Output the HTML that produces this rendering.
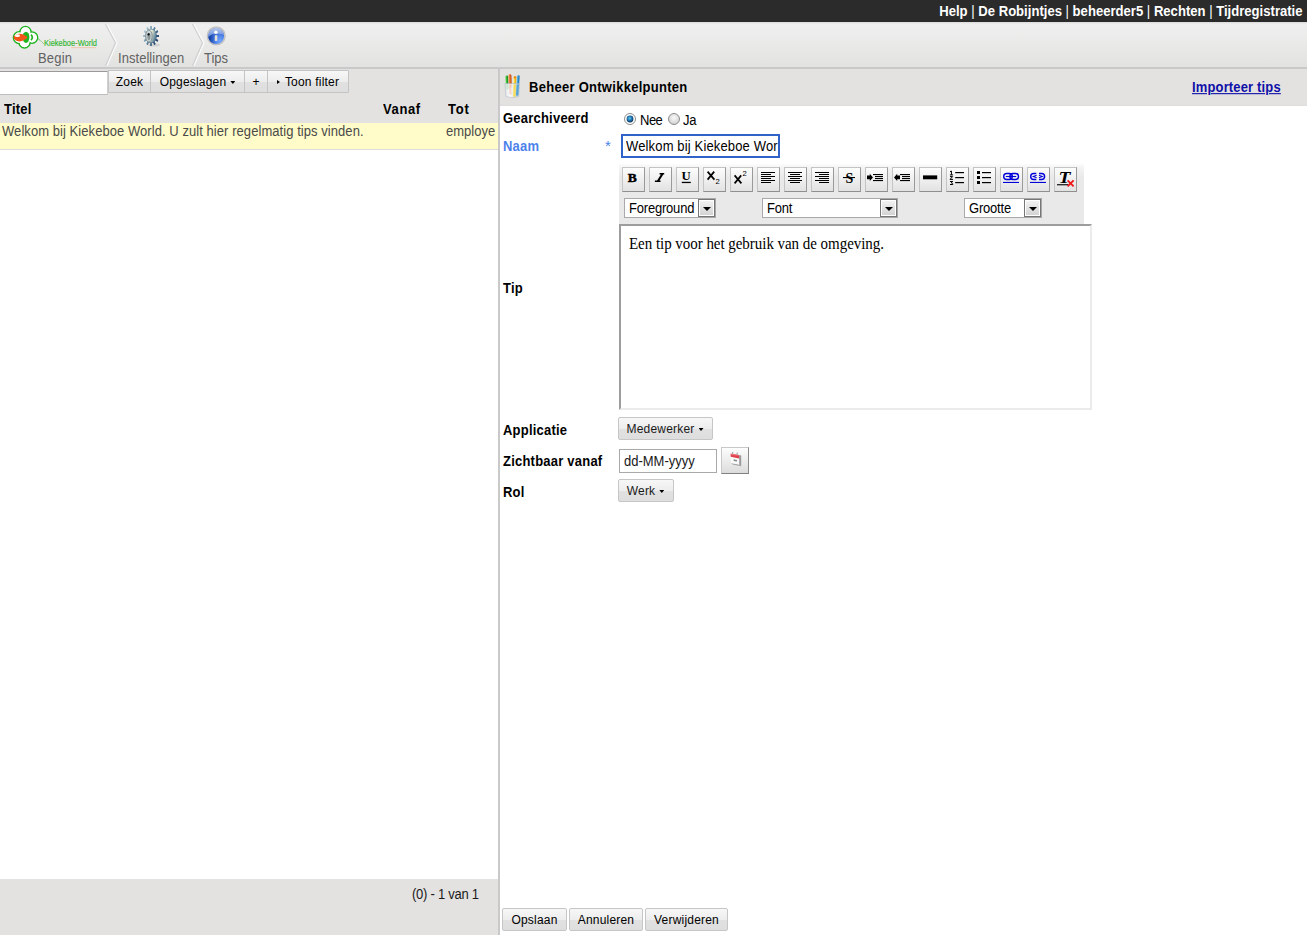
<!DOCTYPE html>
<html><head><meta charset="utf-8">
<style>
*{box-sizing:border-box}
html,body{margin:0;padding:0;width:1307px;height:935px;overflow:hidden;background:#fff;font-family:"Liberation Sans",sans-serif;font-size:13px;color:#000}
.a{position:absolute;white-space:nowrap;line-height:15px}
.b{font-weight:bold}
.sy{transform:scaleY(1.1);transform-origin:0 12px}
.syi{display:inline-block;transform:scaleY(1.1)}
#top{position:absolute;left:0;top:0;width:1307px;height:22px;background:#2b2b2b;color:#fff;font-weight:bold;font-size:13px}
#top .s{font-weight:normal}
#nav{position:absolute;left:0;top:22px;width:1307px;height:45px;background:linear-gradient(#d9d9d9 0,#efefef 2px,#ebebea 40%,#e2e2e1 100%)}
#navb{position:absolute;left:0;top:67px;width:1307px;height:2px;background:#c9c9c9}
.navt{position:absolute;color:#626262;font-size:13px;line-height:15px;white-space:nowrap;transform:scaleY(1.1);transform-origin:0 12px}
.btn{position:absolute;border:1px solid #c6c6c6;background:linear-gradient(#f7f7f7 0,#ededed 50%,#e1e1e1 51%,#dedede 100%);border-radius:2px;font-size:12px;line-height:21px;padding-top:1px;text-align:center;color:#000;white-space:nowrap;letter-spacing:0.2px}
.lbl{position:absolute;font-weight:bold;font-size:13px;line-height:15px;white-space:nowrap;letter-spacing:0.22px;transform:scaleY(1.1);transform-origin:0 12px}
.tb{position:absolute;top:167px;width:23px;height:25px;border:1px solid #c4c4c4;border-right-color:#9a9a9a;border-bottom-color:#8f8f8f;background:linear-gradient(#fdfdfd,#e2e2e2)}
.tb svg{position:absolute;left:0;top:0}
.sel{position:absolute;top:198px;height:20px;border:1px solid #a9a9a9;background:#fff;font-size:13px;line-height:18px;padding-left:4px;white-space:nowrap;letter-spacing:-0.2px}
.sel i{position:absolute;right:0;top:0;width:17px;height:18px;border:1px solid #767676;background:linear-gradient(#fff,#fff) padding-box}
.sel i b{position:absolute;left:1px;top:1px;right:1px;bottom:1px;background:linear-gradient(#f2f2f2,#d3d3d3)}
.sel i:after{content:"";position:absolute;left:4px;top:7px;width:8px;height:4px;background:#000;clip-path:polygon(0 0,100% 0,50% 100%)}
.arr{display:inline-block;width:5px;height:3px;background:#000;clip-path:polygon(0 0,100% 0,50% 100%);vertical-align:baseline;margin-left:4px;position:relative;top:-2px}
</style></head><body>
<div id="top"><span class="a" style="right:4px;top:4px;font-size:14px;transform:scaleX(0.935);transform-origin:100% 0">Help <span class="s">|</span> De Robijntjes <span class="s">|</span> beheerder5 <span class="s">|</span> Rechten <span class="s">|</span> Tijdregistratie</span></div>
<div id="nav">
  <!-- logo -->
  <svg style="position:absolute;left:0;top:0" width="110" height="45" viewBox="0 22 110 45">
    <g fill="#fff" stroke="#1fb41f" stroke-width="1.5">
      <circle cx="25.5" cy="32.2" r="5.6"/>
      <circle cx="32" cy="37.6" r="5.6"/>
      <circle cx="24.5" cy="42.3" r="5.6"/>
      <circle cx="19.2" cy="37.6" r="5.8"/>
    </g>
    <g fill="#fff">
      <circle cx="25.5" cy="32.2" r="4.85"/>
      <circle cx="32" cy="37.6" r="4.85"/>
      <circle cx="24.5" cy="42.3" r="4.85"/>
      <circle cx="19.2" cy="37.6" r="5.05"/>
      <circle cx="25" cy="37.5" r="5.5"/>
    </g>
    <ellipse cx="26" cy="37.3" rx="3.4" ry="5.6" fill="#22b522"/>
    <path d="M31 34.6 q2.6 2.8 0 5.6" stroke="#22b522" stroke-width="1.7" fill="none"/>
    <ellipse cx="19.6" cy="37.6" rx="6" ry="3.9" fill="#f4561a"/>
    <ellipse cx="24" cy="37.4" rx="3" ry="1.8" fill="#f4561a"/>
    <ellipse cx="17.4" cy="35.7" rx="2.6" ry="1.4" fill="#fff"/>
    <path d="M38 38.5 L43.5 43.5" stroke="#38b038" stroke-width="1" stroke-dasharray="1 0.7"/>
    <text x="44" y="46" font-family="Liberation Sans" font-size="8.6" fill="#2fb52f" stroke="#2fb52f" stroke-width="0.15" textLength="53" lengthAdjust="spacingAndGlyphs">Kiekeboe<tspan fill="#f07a3a">-</tspan>World</text>
    <rect x="71" y="47.3" width="25" height="0.8" fill="#f3b48a" opacity="0.8"/>
  </svg>
  <!-- chevrons -->
  <svg style="position:absolute;left:100px;top:0" width="20" height="45" viewBox="0 0 20 45"><path d="M5.5 2 L15.5 21 L5.5 44" fill="none" stroke="#cfcfcf" stroke-width="1.2"/><path d="M7 2 L17 21 L7 44" fill="none" stroke="#fafafa" stroke-width="1.2"/></svg>
  <svg style="position:absolute;left:187px;top:0" width="20" height="45" viewBox="0 0 20 45"><path d="M5.5 2 L15.5 21 L5.5 44" fill="none" stroke="#cfcfcf" stroke-width="1.2"/><path d="M7 2 L17 21 L7 44" fill="none" stroke="#fafafa" stroke-width="1.2"/></svg>
  <!-- gear -->
  <svg style="position:absolute;left:140px;top:2px" width="24" height="24" viewBox="0 0 24 24">
    <defs><linearGradient id="gt" x1="0" y1="0.2" x2="1" y2="0.8"><stop offset="0" stop-color="#c4dae2"/><stop offset="0.45" stop-color="#5f86a0"/><stop offset="1" stop-color="#1a385e"/></linearGradient>
    <linearGradient id="gb" x1="0" y1="0" x2="1" y2="0.4"><stop offset="0" stop-color="#e4eef0"/><stop offset="0.55" stop-color="#e6ead0"/><stop offset="1" stop-color="#5a8098"/></linearGradient></defs>
    <ellipse cx="14" cy="21" rx="6" ry="1.6" fill="#bbb" opacity="0.5"/>
    <g transform="translate(11 12) scale(0.8 1)">
      <path d="M-1.05 -7.12 L-1.05 -9.95 L1.05 -9.95 L1.05 -7.12 L2.65 -6.69 L4.07 -9.14 L5.88 -8.09 L4.47 -5.64 L5.64 -4.47 L8.09 -5.88 L9.14 -4.07 L6.69 -2.65 L7.12 -1.05 L9.95 -1.05 L9.95 1.05 L7.12 1.05 L6.69 2.65 L9.14 4.07 L8.09 5.88 L5.64 4.47 L4.47 5.64 L5.88 8.09 L4.07 9.14 L2.65 6.69 L1.05 7.12 L1.05 9.95 L-1.05 9.95 L-1.05 7.12 L-2.65 6.69 L-4.07 9.14 L-5.88 8.09 L-4.47 5.64 L-5.64 4.47 L-8.09 5.88 L-9.14 4.07 L-6.69 2.65 L-7.12 1.05 L-9.95 1.05 L-9.95 -1.05 L-7.12 -1.05 L-6.69 -2.65 L-9.14 -4.07 L-8.09 -5.88 L-5.64 -4.47 L-4.47 -5.64 L-5.88 -8.09 L-4.07 -9.14 L-2.65 -6.69 Z" fill="url(#gt)"/>
      <circle r="6.6" fill="url(#gb)"/>
      <ellipse cx="-2.6" cy="0" rx="4" ry="6" fill="#c9d6d8" stroke="#7a8488" stroke-width="0.9"/>
      <ellipse cx="-2.6" cy="0.5" rx="2" ry="3.6" fill="#8a9494"/>
      <ellipse cx="-3" cy="-1.6" rx="1.4" ry="1.1" fill="#000"/>
    </g>
  </svg>
  <!-- info -->
  <svg style="position:absolute;left:206px;top:4px" width="21" height="21" viewBox="0 0 21 21">
    <defs><radialGradient id="ib" cx="0.75" cy="0.8" r="0.9"><stop offset="0" stop-color="#72a6ff"/><stop offset="0.6" stop-color="#3c6fd8"/><stop offset="1" stop-color="#2858c0"/></radialGradient>
    <linearGradient id="it" x1="0" y1="0" x2="0" y2="1"><stop offset="0" stop-color="#b4c6ea"/><stop offset="1" stop-color="#5c86dc"/></linearGradient>
    <linearGradient id="id" x1="0" y1="0" x2="1" y2="0"><stop offset="0" stop-color="#0c3490"/><stop offset="1" stop-color="#2a5cc8" stop-opacity="0"/></linearGradient></defs>
    <circle cx="10.2" cy="9.9" r="9.6" fill="#c2c2c2"/>
    <circle cx="10.2" cy="9.9" r="8.4" fill="#d0d0d0"/>
    <circle cx="10.2" cy="10.2" r="7.9" fill="url(#ib)"/>
    <path d="M2.4 11.6 C4.5 8.6 7 7.8 10 7.8 C13 7.8 15.5 8 18 8.4 A7.9 7.9 0 0 0 2.4 11.6 Z" fill="url(#it)"/>
    <path d="M2.4 11.6 C4.5 8.6 7 7.8 10 7.8 L10 18 A7.9 7.9 0 0 1 2.4 11.6 Z" fill="url(#id)"/>
    <circle cx="9.9" cy="6.2" r="1.7" fill="#fff"/>
    <rect x="8.8" y="9.3" width="2.5" height="5.6" fill="#e6e2d6"/>
  </svg>
  <span class="navt" style="left:38px;top:29px;letter-spacing:0.2px">Begin</span>
  <span class="navt" style="left:118px;top:29px;letter-spacing:0.05px">Instellingen</span>
  <span class="navt" style="left:204px;top:29px">Tips</span>
</div>
<div id="navb"></div>

<!-- LEFT PANEL -->
<div style="position:absolute;left:0;top:69px;width:498px;height:54px;background:#e3e2e1"></div>
<div style="position:absolute;left:0;top:71px;width:108px;height:24px;background:#fff;border-top:1px solid #9a9a9a;border-right:1px solid #d0d0d0;border-bottom:1px solid #bdbdbd"></div>
<div class="btn" style="left:108px;top:70px;width:43px;height:23px;border-radius:0;border-color:#c4c4c4">Zoek</div>
<div class="btn" style="left:150px;top:70px;width:95px;height:23px;border-radius:0;border-color:#c4c4c4">Opgeslagen<span class="arr"></span></div>
<div class="btn" style="left:244px;top:70px;width:24px;height:23px;border-radius:0;border-color:#c4c4c4">+</div>
<div class="btn" style="left:267px;top:70px;width:82px;height:23px;border-radius:0 1px 1px 0;border-color:#c4c4c4"><span style="display:inline-block;width:0;height:0;border-top:2.5px solid transparent;border-bottom:2.5px solid transparent;border-left:3px solid #000;margin-right:5px;vertical-align:middle;position:relative;top:-1px"></span>Toon filter</div>
<span class="lbl" style="left:4px;top:102px">Titel</span>
<span class="lbl" style="left:383px;top:102px;letter-spacing:0.6px">Vanaf</span>
<span class="lbl" style="left:448px;top:102px;letter-spacing:0.8px">Tot</span>
<div style="position:absolute;left:0;top:123px;width:498px;height:27px;background:#fffcc9;border-bottom:1px solid #dcdcdc;color:#4a4a4a"><span class="a sy" style="left:2px;top:1px;line-height:15px;letter-spacing:0.06px">Welkom bij Kiekeboe World. U zult hier regelmatig tips vinden.</span><span class="a sy" style="left:446px;top:1px;width:49px;overflow:hidden">employee</span></div>
<div style="position:absolute;left:0;top:879px;width:498px;height:56px;background:#e3e2e1"><span class="a sy" style="left:412px;top:8px;color:#1a1a1a;font-size:13px;letter-spacing:-0.25px">(0) - 1 van 1</span></div>
<div style="position:absolute;left:498px;top:69px;width:2px;height:866px;background:#c9c9c9"></div>

<!-- RIGHT PANEL -->
<div style="position:absolute;left:500px;top:69px;width:807px;height:37px;background:linear-gradient(#e3e2e1 0,#e3e2e1 35px,#dfdedc 36px)"></div>
<svg style="position:absolute;left:502px;top:72px" width="22" height="28" viewBox="0 0 22 28">
  <defs><linearGradient id="cup" x1="0" y1="0" x2="1" y2="0"><stop offset="0" stop-color="#e4eaee"/><stop offset="0.35" stop-color="#ffffff"/><stop offset="1" stop-color="#bcc8d2"/></linearGradient>
  <linearGradient id="pg" x1="0" y1="0" x2="1" y2="0"><stop offset="0" stop-color="#7ee070"/><stop offset="0.5" stop-color="#2cb030"/><stop offset="1" stop-color="#167a1e"/></linearGradient>
  <linearGradient id="po" x1="0" y1="0" x2="1" y2="0"><stop offset="0" stop-color="#f8a060"/><stop offset="0.5" stop-color="#e8702a"/><stop offset="1" stop-color="#b84010"/></linearGradient>
  <linearGradient id="py" x1="0" y1="0" x2="1" y2="0"><stop offset="0" stop-color="#fff070"/><stop offset="0.5" stop-color="#f6cc1a"/><stop offset="1" stop-color="#e09a10"/></linearGradient>
  <linearGradient id="pb" x1="0" y1="0" x2="1" y2="0"><stop offset="0" stop-color="#6ac0f0"/><stop offset="0.5" stop-color="#3094d0"/><stop offset="1" stop-color="#1a6aa8"/></linearGradient></defs>
  <g transform="rotate(-3 5 24)"><rect x="4.3" y="3.6" width="2.8" height="14" rx="1.3" fill="url(#pg)"/></g>
  <g transform="rotate(-2 8.5 24)"><rect x="7.1" y="2.2" width="3" height="14" rx="1.4" fill="url(#po)"/></g>
  <g transform="rotate(2 12 24)"><rect x="11" y="4.2" width="2.7" height="21" rx="1.2" fill="url(#py)"/><rect x="11" y="4.2" width="2.7" height="2.2" rx="1" fill="#ec8a2a"/></g>
  <g transform="rotate(4 15 24)"><rect x="13.7" y="3.2" width="2.6" height="20.5" rx="1.2" fill="url(#pb)"/></g>
  <path d="M3 11.5 L17.5 11.5 L16.6 24.5 Q10 26.8 3.9 24.5 Z" fill="url(#cup)" opacity="0.82" stroke="#b0bcc6" stroke-width="0.7"/>
  <g transform="rotate(2 12 24)"><rect x="11.2" y="12.5" width="2.3" height="12" fill="#f8dc50" opacity="0.95"/></g>
  <g transform="rotate(4 15 24)"><rect x="13.9" y="12.5" width="2.2" height="11" fill="#46a0d8" opacity="0.9"/></g>
  <g transform="rotate(-2 8.5 24)"><rect x="7.4" y="12.5" width="2.2" height="10" fill="#f2b8a6" opacity="0.55"/></g>
</svg>
<span class="lbl" style="left:529px;top:80px;letter-spacing:0.28px">Beheer Ontwikkelpunten</span>
<span class="a b sy" style="left:1192px;top:80px;color:#1010a8;text-decoration:underline;letter-spacing:0.15px">Importeer tips</span>

<span class="lbl" style="left:503px;top:111px">Gearchiveerd</span>
<svg style="position:absolute;left:624px;top:113px" width="12" height="12" viewBox="0 0 12 12">
  <defs><radialGradient id="rb" cx="0.45" cy="0.4" r="0.6"><stop offset="0" stop-color="#5cc8f0"/><stop offset="0.6" stop-color="#1a6aa8"/><stop offset="1" stop-color="#0a2a50"/></radialGradient>
  <radialGradient id="rg" cx="0.5" cy="0.4" r="0.6"><stop offset="0" stop-color="#fafafa"/><stop offset="1" stop-color="#cfcfcf"/></radialGradient></defs>
  <circle cx="6" cy="6" r="5.5" fill="#fff" stroke="#8e8e8e" stroke-width="1"/>
  <circle cx="6" cy="6" r="3.4" fill="url(#rb)"/>
</svg>
<span class="a sy" style="left:640px;top:113px;font-size:13px;letter-spacing:-0.5px">Nee</span>
<svg style="position:absolute;left:668px;top:113px" width="12" height="12" viewBox="0 0 12 12">
  <circle cx="6" cy="6" r="5.5" fill="url(#rg)" stroke="#8e8e8e" stroke-width="1"/>
</svg>
<span class="a sy" style="left:683px;top:113px;font-size:13px;letter-spacing:-0.3px">Ja</span>

<span class="lbl" style="left:503px;top:139px;color:#4d82ec">Naam</span>
<span class="a" style="left:605px;top:138px;color:#4d82ec;font-size:15px">*</span>
<div style="position:absolute;left:621px;top:134px;width:159px;height:24px;border:2px solid #2f63c8;font-size:13px;line-height:21px;padding-left:3px;letter-spacing:0.15px;overflow:hidden;white-space:nowrap;background:#fff"><span class="syi" style="transform-origin:0 15px">Welkom bij Kiekeboe World</span></div>

<!-- editor toolbar -->
<div style="position:absolute;left:619px;top:164px;width:465px;height:60px;background:linear-gradient(#fcfcfc 0,#f3f3f3 4px,#e9e9e9 14px,#e9e9e9)"></div>
<div class="tb" style="left:622px"><svg width="21" height="23"><text x="4.8" y="14" font-family="Liberation Serif" font-weight="bold" font-size="13.4" textLength="9" lengthAdjust="spacingAndGlyphs" stroke="#000" stroke-width="0.5">B</text></svg></div>
<div class="tb" style="left:649px"><svg width="21" height="23"><path d="M9.6 5 H14.2 V6.4 H13.3 L9.5 12.6 H10.5 V14 H4.9 V12.6 H7.1 L10.9 6.4 H9.6 Z" fill="#000"/></svg></div>
<div class="tb" style="left:676px"><svg width="21" height="23"><text x="4.6" y="12.2" font-family="Liberation Serif" font-weight="bold" font-size="11.8" textLength="9.2" lengthAdjust="spacingAndGlyphs">U</text><rect x="4.8" y="13.8" width="9" height="1.3" fill="#000"/></svg></div>
<div class="tb" style="left:703px"><svg width="21" height="23"><path d="M3.6 3.6 L10.4 11.6 M10.2 3.6 L3.6 11.6" stroke="#000" stroke-width="1.7"/><text x="11.6" y="15.8" font-family="Liberation Sans" font-size="7.6">2</text></svg></div>
<div class="tb" style="left:730px"><svg width="21" height="23"><path d="M3.6 7.4 L10.4 15.4 M10.2 7.4 L3.6 15.4" stroke="#000" stroke-width="1.7"/><text x="11.4" y="8.2" font-family="Liberation Sans" font-size="7.6">2</text></svg></div>
<div class="tb" style="left:757px"><svg width="21" height="23"><g fill="#000"><rect x="3" y="4" width="14" height="1"/><rect x="3" y="6" width="10" height="1"/><rect x="3" y="8" width="14" height="1"/><rect x="3" y="10" width="10" height="1"/><rect x="3" y="12" width="14" height="1"/><rect x="3" y="14" width="10" height="1"/></g></svg></div>
<div class="tb" style="left:784px"><svg width="21" height="23"><g fill="#000"><rect x="3" y="4" width="14" height="1"/><rect x="5" y="6" width="10" height="1"/><rect x="3" y="8" width="14" height="1"/><rect x="5" y="10" width="10" height="1"/><rect x="3" y="12" width="14" height="1"/><rect x="5" y="14" width="10" height="1"/></g></svg></div>
<div class="tb" style="left:811px"><svg width="21" height="23"><g fill="#000"><rect x="3" y="4" width="14" height="1"/><rect x="7" y="6" width="10" height="1"/><rect x="3" y="8" width="14" height="1"/><rect x="7" y="10" width="10" height="1"/><rect x="3" y="12" width="14" height="1"/><rect x="7" y="14" width="10" height="1"/></g></svg></div>
<div class="tb" style="left:838px"><svg width="21" height="23"><text x="6.6" y="14.8" font-family="Liberation Serif" font-weight="bold" font-size="14.4" textLength="7.8" lengthAdjust="spacingAndGlyphs">S</text><rect x="4" y="9" width="12" height="1.1" fill="#000"/></svg></div>
<div class="tb" style="left:865px"><svg width="21" height="23"><g fill="#000"><path d="M1 7.6 h2.8 v-1.8 l3.2 3.6 l-3.2 3.6 v-1.8 h-2.8 z"/><rect x="7" y="6" width="10" height="1.1"/><rect x="9" y="8" width="8" height="1.1"/><rect x="9" y="10" width="8" height="1.1"/><rect x="7" y="12" width="10" height="1.1"/></g></svg></div>
<div class="tb" style="left:892px"><svg width="21" height="23"><g fill="#000"><path d="M7 7.6 h-2.8 v-1.8 l-3.2 3.6 l3.2 3.6 v-1.8 h2.8 z"/><rect x="7" y="6" width="10" height="1.1"/><rect x="9" y="8" width="8" height="1.1"/><rect x="9" y="10" width="8" height="1.1"/><rect x="7" y="12" width="10" height="1.1"/></g></svg></div>
<div class="tb" style="left:919px"><svg width="21" height="23"><rect x="3" y="7.4" width="14.2" height="3.9" fill="#000"/></svg></div>
<div class="tb" style="left:946px"><svg width="21" height="23"><g fill="#000"><rect x="8.2" y="4" width="8.8" height="1.2"/><rect x="8.2" y="9" width="8.8" height="1.2"/><rect x="8.2" y="14" width="8.8" height="1.2"/></g><g fill="none" stroke="#000" stroke-width="1"><path d="M3 3.6 l1.4 -0.6 v3.8 M2.9 6.9 h3.2"/><path d="M3 8.6 h2.6 l-2.6 2.8 h3"/><path d="M3 13.5 h2.8 l-1.6 1.2 l1.6 1.2 v0.6 h-2.8"/></g></svg></div>
<div class="tb" style="left:973px"><svg width="21" height="23"><g fill="#000"><rect x="3" y="3" width="3" height="3"/><rect x="3" y="8" width="3" height="3"/><rect x="3" y="13" width="3" height="3"/><rect x="8" y="4" width="9" height="1.2"/><rect x="8" y="9" width="9" height="1.2"/><rect x="8" y="14" width="9" height="1.2"/></g></svg></div>
<div class="tb" style="left:1000px"><svg width="21" height="23"><g fill="none" stroke="#0000d8" stroke-width="1.4"><rect x="2.7" y="5.5" width="8.6" height="6" rx="3"/><rect x="8.9" y="5.5" width="8.6" height="6" rx="3"/><path d="M4.8 8.5 h10.4" stroke-width="1.1"/></g><rect x="2" y="13.9" width="16" height="1.1" fill="#0000d8"/></svg></div>
<div class="tb" style="left:1027px"><svg width="21" height="23"><g fill="none" stroke="#0000d8" stroke-width="1.4"><path d="M8.3 5.5 h-2.6 a3 3 0 0 0 0 6 h2.6"/><path d="M8.6 7.3 L5.4 8.5 L8.6 9.7" stroke-width="1.1"/><path d="M11 5.5 h2.6 a3 3 0 0 1 0 6 h-2.6"/><path d="M11 7.3 L14.2 8.5 L11 9.7" stroke-width="1.1"/></g><rect x="2" y="13.9" width="16" height="1.1" fill="#0000d8"/></svg></div>
<div class="tb" style="left:1054px"><svg width="21" height="23"><text x="3.6" y="15" font-family="Liberation Serif" font-weight="bold" font-style="italic" font-size="16.5" textLength="12" lengthAdjust="spacingAndGlyphs">T</text><rect x="2" y="16.2" width="11.3" height="1.1" fill="#000"/><path d="M12.6 12.3 l6 6 M18.6 12.3 l-6 6" stroke="#f01818" stroke-width="1.9"/></svg></div>

<div class="sel" style="left:624px;width:92px"><span class="syi" style="transform-origin:0 13.5px;position:relative;top:1px">Foreground</span><i><b></b></i></div>
<div class="sel" style="left:762px;width:136px"><span class="syi" style="transform-origin:0 13.5px;position:relative;top:1px">Font</span><i><b></b></i></div>
<div class="sel" style="left:964px;width:78px"><span class="syi" style="transform-origin:0 13.5px;position:relative;top:1px">Grootte</span><i><b></b></i></div>

<div style="position:absolute;left:619px;top:224px;width:473px;height:186px;border-top:2px solid #9d9d9d;border-left:2px solid #9d9d9d;border-right:2px solid #ebebeb;border-bottom:2px solid #ebebeb;background:#fff"><span class="a" style="left:8px;top:10px;font-family:'Liberation Serif',serif;font-size:15px;line-height:17px;letter-spacing:-0.04px;transform:scaleY(1.08);transform-origin:0 13.6px">Een tip voor het gebruik van de omgeving.</span></div>
<span class="lbl" style="left:503px;top:281px">Tip</span>

<span class="lbl" style="left:503px;top:423px">Applicatie</span>
<div class="btn" style="left:618px;top:417px;width:95px;height:23px;color:#1a1a1a;padding-right:1px">Medewerker<span class="arr"></span></div>
<span class="lbl" style="left:503px;top:454px">Zichtbaar vanaf</span>
<div style="position:absolute;left:619px;top:449px;width:98px;height:24px;border:1px solid #a9a9a9;font-size:13px;line-height:22px;padding-left:4px;color:#1a1a1a;background:#fff"><span class="syi" style="transform-origin:0 15.5px;position:relative;top:1px">dd-MM-yyyy</span></div>
<div style="position:absolute;left:721px;top:447px;width:28px;height:27px;border:1px solid #c8c8c8;border-right-color:#8a8a8a;border-bottom-color:#808080;background:linear-gradient(#fdfdfd,#dcdcdc)">
  <svg width="26" height="25" style="position:absolute;left:0;top:0">
<path d="M17.1 6.9 L19.2 7.6 L19.2 18.2 L17.1 16.4 Z" fill="#8c8c8c" opacity="0.85"/>
<path d="M9 14.9 L17.1 16.4 L19.2 18.2 L11 16.8 Z" fill="#9a9a9a" opacity="0.8"/>
<path d="M8.7 8.7 L17.1 10.5 L17.1 16.4 L9 14.9 Z" fill="#fbfbfb"/>
<path d="M8.7 5.8 L17.1 6.9 L17.1 10.5 L8.7 8.7 Z" fill="#e2404c"/>
<path d="M8.7 5.8 L17.1 6.9 L17.1 8 L8.7 7 Z" fill="#f27080" opacity="0.7"/>
<rect x="10" y="4" width="1.2" height="2.4" fill="#aaa"/><rect x="14.6" y="4.5" width="1.2" height="2.4" fill="#aaa"/>
<path d="M11.6 11.2 L15 11.9 L15 13.6 L11.6 12.9 Z" fill="#8a8a8a"/>
</svg>
</div>
<span class="lbl" style="left:503px;top:485px">Rol</span>
<div class="btn" style="left:618px;top:479px;width:56px;height:23px;color:#1a1a1a;padding-right:1px">Werk<span class="arr"></span></div>

<div class="btn" style="left:502px;top:908px;width:65px;height:23px">Opslaan</div>
<div class="btn" style="left:569px;top:908px;width:74px;height:23px">Annuleren</div>
<div class="btn" style="left:645px;top:908px;width:83px;height:23px">Verwijderen</div>
</body></html>
